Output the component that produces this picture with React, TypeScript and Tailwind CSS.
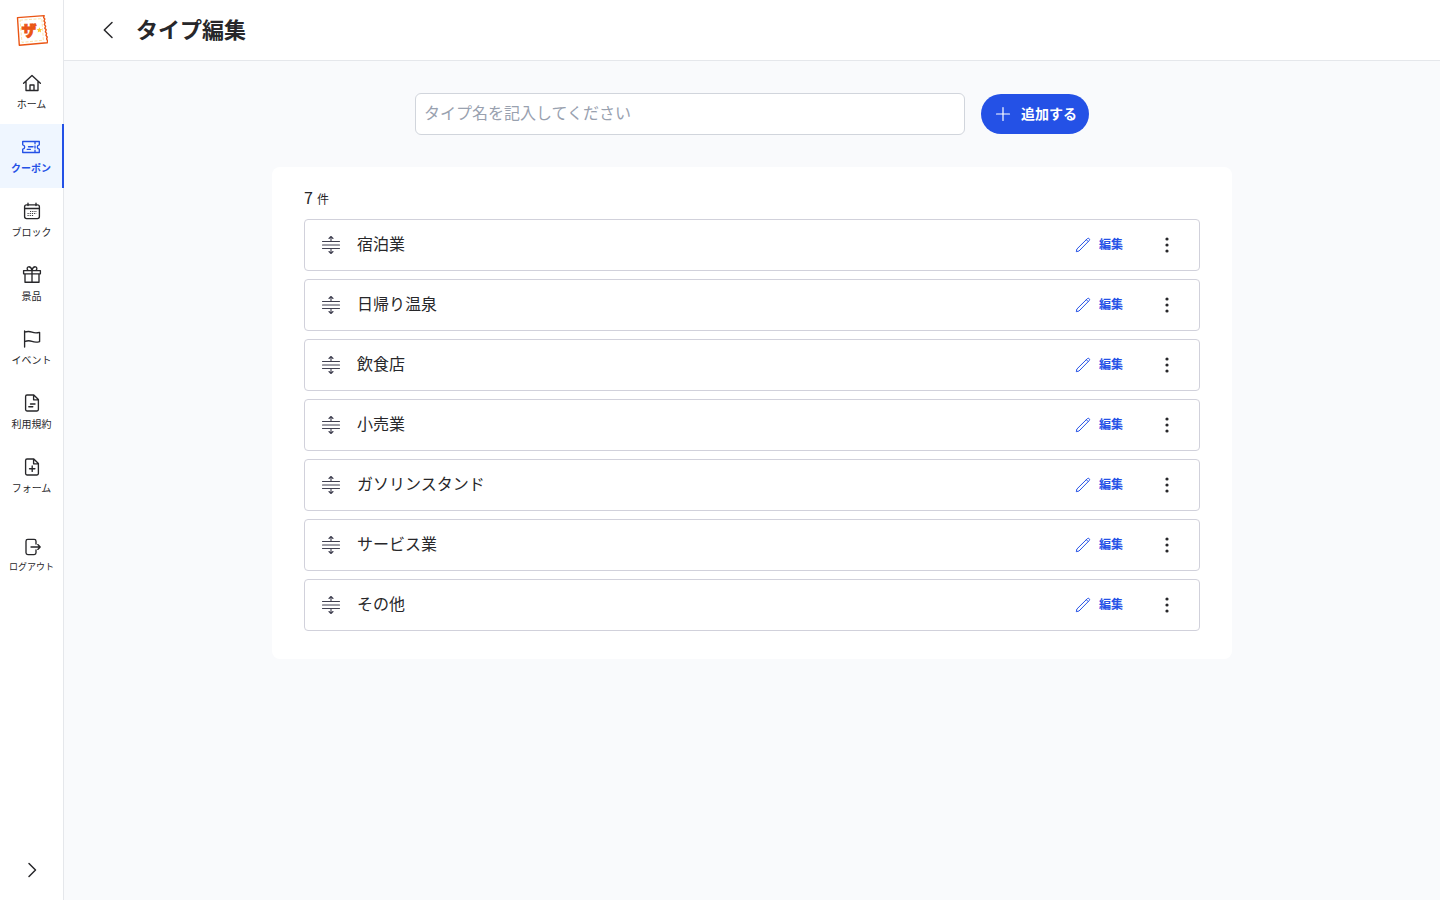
import type { ReactNode } from "react";
import clsx from "clsx";

type NavItem = {
    label: string;
    icon: ReactNode;
    active?: boolean;
};

const navItems: NavItem[] = [
    {
        label: "ホーム",
        icon: (
            <path d="M1.6 10.2 10 2.4l8.4 7.800M4 8.200v9.300h12V8.200M8 17.200v-5.200h4v5.200" />
        ),
    },
    {
        label: "クーポン",
        active: true,
        icon: (
            <>
                <path d="M1.700 4.500h16.600v3.300c-1.300.2-2 1-2 2.200s.7 2 2 2.200v3.300H1.700v-3.300c1.300-.2 2-1 2-2.200s-.7-2-2-2.200z" />
                <path d="M7.500 9.700H12M6.200 12.300h3.200M14 5v1.800M14 9v2M14 13.200V15" />
            </>
        ),
    },
    {
        label: "ブロック",
        icon: (
            <>
                <rect x="2.6" y="3.8" width="14.8" height="13.8" rx="2" />
                <path d="M2.6 7.5h14.8M6 2.2v2.4M14 2.2v2.4" />
                <path
                    d="M8 10.500h7M5.500 12.500h9M5.500 14.500h6"
                    strokeDasharray="1.2 1"
                    strokeWidth=".9"
                    strokeLinecap="butt"
                />
            </>
        ),
    },
    {
        label: "景品",
        icon: (
            <path d="M1.6 5.6h16.8v3.2H1.6zM3 8.8h14v8.4H3zM10 5.6v11.600M10 5.400C9.300 2.600 7.900 1.700 6.600 1.800 5 2 4.600 4 6 5.400M10 5.400c.7-2.800 2.100-3.700 3.400-3.600 1.600.2 2 2.200.6 3.600" />
        ),
    },
    {
        label: "イベント",
        icon: (
            <path d="M2.600 2v16M2.600 3.200c2.800-1 5-.9 7.400 0s4.600 1 7.600.2v9.200c-3 .9-5.200.7-7.600-.2s-4.600-.9-7.400.2" />
        ),
    },
    {
        label: "利用規約",
        icon: (
            <>
                <path d="M5 2h6.800l4.600 4.600v10q0 1.400-1.400 1.400H5q-1.400 0-1.400-1.400V3.400Q3.600 2 5 2zM11.600 2.200v4.600h4.600" />
                <path d="M8.500 11H13M6.800 13.700h4" />
            </>
        ),
    },
    {
        label: "フォーム",
        icon: (
            <>
                <path d="M5 2h6.800l4.600 4.600v10q0 1.400-1.400 1.400H5q-1.400 0-1.400-1.400V3.400Q3.600 2 5 2zM11.600 2.200v4.600h4.600" />
                <path d="M10.200 9v5.400M7.500 11.700h5.400" />
            </>
        ),
    },
];

const types = [
    "宿泊業",
    "日帰り温泉",
    "飲食店",
    "小売業",
    "ガソリンスタンド",
    "サービス業",
    "その他",
];

export default function App() {
    return (
        <div className="flex min-h-screen bg-[#f9fafc] font-['Noto_Sans_CJK_JP',sans-serif] text-[#27272a]">
            <Sidebar />
            <div className="flex min-w-0 flex-1 flex-col">
                <header className="flex h-[61px] items-center gap-4 border-b border-gray-200 bg-white px-8">
                    <button
                        type="button"
                        aria-label="戻る"
                        className="grid h-10 w-6 place-items-center"
                    >
                        <svg
                            viewBox="0 0 24 24"
                            className="size-6 fill-none stroke-current"
                            strokeWidth="1.5"
                            strokeLinecap="round"
                            strokeLinejoin="round"
                        >
                            <path d="M16 4.500 8.300 12l7.700 7.500" />
                        </svg>
                    </button>
                    <h1 className="pb-1 text-[22px] leading-8 font-bold">
                        タイプ編集
                    </h1>
                </header>

                <main className="flex flex-col items-center gap-8 p-8">
                    <form
                        className="flex w-full max-w-[674px] items-center gap-4"
                        onSubmit={(e) => e.preventDefault()}
                    >
                        <input
                            type="text"
                            aria-label="タイプ名"
                            placeholder="タイプ名を記入してください"
                            className="h-[42px] min-w-0 flex-1 rounded-md border border-gray-300 bg-white px-2 pb-1 text-base placeholder:text-gray-400"
                        />
                        <button
                            type="submit"
                            className="flex h-10 shrink-0 items-center gap-2 rounded-full bg-[#2451e6] px-3 text-sm font-bold text-white"
                        >
                            <svg
                                viewBox="0 0 20 20"
                                className="size-5 fill-none stroke-current"
                                strokeWidth="1.2"
                                strokeLinecap="round"
                            >
                                <path d="M10 3.500v13M3.500 10h13" />
                            </svg>
                            <span className="pb-0.5">追加する</span>
                        </button>
                    </form>

                    <section className="w-full max-w-[960px] rounded-lg bg-white px-8 pt-[18px] pb-7">
                        <p className="flex items-baseline gap-1 leading-6">
                            {types.length}
                            <span className="text-xs">件</span>
                        </p>
                        <ul className="mt-2.5 space-y-2">
                            {types.map((name) => (
                                <TypeRow key={name} name={name} />
                            ))}
                        </ul>
                    </section>
                </main>
            </div>
        </div>
    );
}

function Sidebar() {
    return (
        <aside className="sticky top-0 flex h-screen w-16 shrink-0 flex-col border-r border-gray-200 bg-white">
            <a
                href="#"
                aria-label="トップ"
                className="flex h-[60px] items-center justify-center"
            >
                <Logo />
            </a>
            <nav>
                <ul>
                    {navItems.map((item) => (
                        <li key={item.label}>
                            <a
                                href="#"
                                aria-current={item.active ? "page" : undefined}
                                className={clsx(
                                    "flex h-16 flex-col items-center justify-center gap-0.5 text-[10px] leading-4",
                                    item.active &&
                                        "-mr-px border-r-2 border-[#2451e6] bg-[#eff6ff] font-bold text-[#2451e6]",
                                )}
                            >
                                <NavIcon>{item.icon}</NavIcon>
                                {item.label}
                            </a>
                        </li>
                    ))}
                </ul>
            </nav>
            <button
                type="button"
                className="mt-4 flex h-16 flex-col items-center pt-3 text-[9px] leading-[18px]"
            >
                <NavIcon>
                    <path d="M14 7V4.200Q14 2.400 12.200 2.400H5.800Q4 2.400 4 4.200v11.600q0 1.800 1.800 1.800h6.400q1.800 0 1.800-1.800V13M9 10h9.200M15.800 7.600l2.400 2.400-2.400 2.400" />
                </NavIcon>
                ログアウト
            </button>
            <button
                type="button"
                aria-label="メニューを開く"
                className="mt-auto flex h-[60px] items-center justify-center"
            >
                <svg
                    viewBox="0 0 20 20"
                    className="size-5 fill-none stroke-current"
                    strokeWidth="1.5"
                    strokeLinecap="round"
                    strokeLinejoin="round"
                >
                    <path d="m7 3.500 6.500 6.500L7 16.500" />
                </svg>
            </button>
        </aside>
    );
}

function NavIcon({ children }: { children: ReactNode }) {
    return (
        <svg
            viewBox="-1 -1 22 22"
            className="size-[22px] fill-none stroke-current"
            strokeWidth="1.35"
            strokeLinecap="round"
            strokeLinejoin="round"
            aria-hidden="true"
        >
            {children}
        </svg>
    );
}

function Logo() {
    return (
        <svg viewBox="0 0 32 32" className="size-8" aria-hidden="true">
            <path
                d="M1.500 3.600 28.200 1.600l-.6 2 1.200 1.400-.8 2 1.200 1.600-.8 2 1.200 1.600-.8 2 1.400 1.600-.8 2 1.200 1.600-.6 2 1.200 1.600-.6 2 1 1.800-.4 2L3.300 31.200z"
                fill="#fff"
                stroke="#ea5514"
                strokeWidth="1.4"
                strokeLinejoin="round"
            />
            <path
                d="M4 6.200 25.800 4.600l1.600 21.600-21.400 2.200z"
                fill="none"
                stroke="#fde3a8"
                strokeWidth="1"
                strokeDasharray="3 1.500"
            />
            <text
                x="5.500"
                y="22"
                fontSize="15"
                fontWeight="900"
                fill="#ea5514"
                stroke="#ea5514"
                strokeWidth=".8"
            >
                ザ
            </text>
            <path
                d="m23.400 13.200.8 1.800 2 .2-1.500 1.400.4 2-1.700-1-1.700 1 .4-2-1.500-1.400 2-.2z"
                fill="#fbc830"
            />
        </svg>
    );
}

function TypeRow({ name }: { name: string }) {
    return (
        <li className="flex h-[52px] items-center gap-4 rounded-sm border border-[#d1d1db] px-4">
            <svg
                viewBox="0 0 20 20"
                className="size-5 shrink-0 cursor-grab fill-none stroke-[#3f3f50]"
                strokeWidth="1.1"
                strokeLinecap="round"
                strokeLinejoin="round"
                aria-hidden="true"
            >
                <path d="M1.500 6.500h17M1.500 10h17M1.500 13.500h17" />
                <path d="M10 6V2M8 3.500l2-2 2 2M10 14v4M8 16.500l2 2 2-2" />
            </svg>
            <span className="min-w-0 flex-1 truncate pb-1">{name}</span>
            <button
                type="button"
                className="flex h-8 items-center gap-2 px-3 text-xs font-bold text-[#2451e6]"
            >
                <svg
                    viewBox="0 0 16 16"
                    className="size-4 fill-none stroke-current"
                    strokeWidth="1"
                    strokeLinejoin="round"
                    aria-hidden="true"
                >
                    <path d="M1.300 14.700 1.900 12 12.300 1.700q1-.9 1.900 0t0 1.900L4 14zM11.300 2.700l1.900 1.900" />
                </svg>
                <span className="pb-0.5">編集</span>
            </button>
            <button
                type="button"
                aria-label={`${name}のメニュー`}
                className="grid size-8 place-items-center"
            >
                <svg
                    viewBox="0 0 20 20"
                    className="size-5 fill-current"
                    aria-hidden="true"
                >
                    <circle cx="10" cy="4" r="1.6" />
                    <circle cx="10" cy="10" r="1.6" />
                    <circle cx="10" cy="16" r="1.6" />
                </svg>
            </button>
        </li>
    );
}
